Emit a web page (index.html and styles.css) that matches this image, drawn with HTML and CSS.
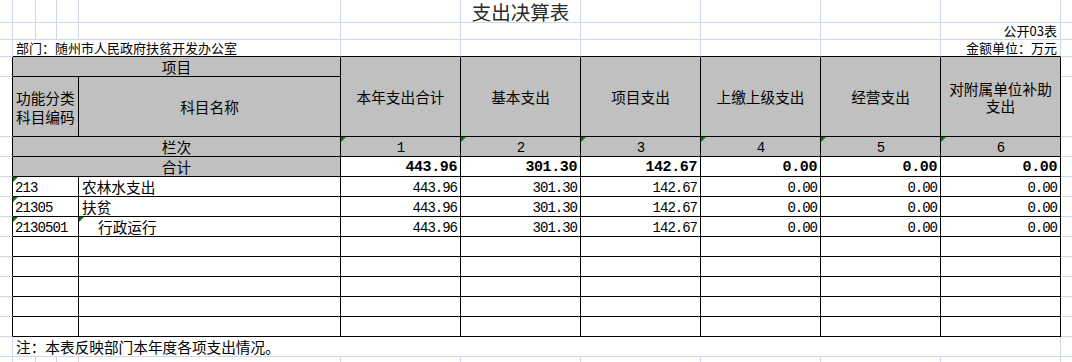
FILE: index.html
```html
<!DOCTYPE html>
<html lang="zh-CN">
<head>
<meta charset="utf-8">
<title>支出决算表</title>
<link rel="stylesheet" href="styles.css">
</head>
<body>
<table class="sheet">
  <colgroup>
    <col class="c0"><col class="c1"><col class="c2"><col class="c3"><col class="c4">
    <col class="cn"><col class="cn"><col class="cn"><col class="cn"><col class="cn"><col class="cn">
    <col class="c11">
  </colgroup>
  <tbody>
    <tr class="r-title">
      <td></td><td></td><td></td><td></td><td></td><td></td>
      <td class="title">支出决算表</td>
      <td></td><td></td><td></td><td></td><td></td>
    </tr>
    <tr class="r-small">
      <td></td><td></td><td></td><td></td><td></td><td></td><td></td><td></td><td></td><td></td>
      <td class="meta right">公开03表</td>
      <td></td>
    </tr>
    <tr class="r-small">
      <td></td>
      <td colspan="4" class="meta tb">部门：随州市人民政府扶贫开发办公室</td>
      <td class="tb"></td><td class="tb"></td><td class="tb"></td><td class="tb"></td><td class="tb"></td>
      <td class="meta right tb">金额单位：万元</td>
      <td></td>
    </tr>
    <tr class="r20">
      <td class="lb"></td>
      <td colspan="4" class="t hd center">项目</td>
      <td rowspan="2" class="t hd center">本年支出合计</td>
      <td rowspan="2" class="t hd center">基本支出</td>
      <td rowspan="2" class="t hd center">项目支出</td>
      <td rowspan="2" class="t hd center">上缴上级支出</td>
      <td rowspan="2" class="t hd center">经营支出</td>
      <td rowspan="2" class="t hd center wrap">对附属单位补助支出</td>
      <td></td>
    </tr>
    <tr class="r60">
      <td class="lb"></td>
      <td colspan="3" class="t hd code-hd">功能分类<br>科目编码</td>
      <td class="t hd center">科目名称</td>
      <td></td>
    </tr>
    <tr class="r20">
      <td class="lb"></td>
      <td colspan="4" class="t hd center">栏次</td>
      <td class="t hd center num-c flag">1</td>
      <td class="t hd center num-c flag">2</td>
      <td class="t hd center num-c flag">3</td>
      <td class="t hd center num-c flag">4</td>
      <td class="t hd center num-c flag">5</td>
      <td class="t hd center num-c flag">6</td>
      <td></td>
    </tr>
    <tr class="r20">
      <td class="lb"></td>
      <td colspan="4" class="t hd center">合计</td>
      <td class="t num bold">443.96</td>
      <td class="t num bold">301.30</td>
      <td class="t num bold">142.67</td>
      <td class="t num bold">0.00</td>
      <td class="t num bold">0.00</td>
      <td class="t num bold">0.00</td>
      <td></td>
    </tr>
    <tr class="r20">
      <td class="lb"></td>
      <td colspan="3" class="t code flag">213</td>
      <td class="t name">农林水支出</td>
      <td class="t num">443.96</td>
      <td class="t num">301.30</td>
      <td class="t num">142.67</td>
      <td class="t num">0.00</td>
      <td class="t num">0.00</td>
      <td class="t num">0.00</td>
      <td></td>
    </tr>
    <tr class="r20">
      <td class="lb"></td>
      <td colspan="3" class="t code flag">21305</td>
      <td class="t name">扶贫</td>
      <td class="t num">443.96</td>
      <td class="t num">301.30</td>
      <td class="t num">142.67</td>
      <td class="t num">0.00</td>
      <td class="t num">0.00</td>
      <td class="t num">0.00</td>
      <td></td>
    </tr>
    <tr class="r20">
      <td class="lb"></td>
      <td colspan="3" class="t code flag">2130501</td>
      <td class="t name indent flag">行政运行</td>
      <td class="t num">443.96</td>
      <td class="t num">301.30</td>
      <td class="t num">142.67</td>
      <td class="t num">0.00</td>
      <td class="t num">0.00</td>
      <td class="t num">0.00</td>
      <td></td>
    </tr>
    <tr class="r20">
      <td class="lb"></td><td colspan="3" class="t"></td><td class="t"></td>
      <td class="t"></td><td class="t"></td><td class="t"></td><td class="t"></td><td class="t"></td><td class="t"></td><td></td>
    </tr>
    <tr class="r20">
      <td class="lb"></td><td colspan="3" class="t"></td><td class="t"></td>
      <td class="t"></td><td class="t"></td><td class="t"></td><td class="t"></td><td class="t"></td><td class="t"></td><td></td>
    </tr>
    <tr class="r20">
      <td class="lb"></td><td colspan="3" class="t"></td><td class="t"></td>
      <td class="t"></td><td class="t"></td><td class="t"></td><td class="t"></td><td class="t"></td><td class="t"></td><td></td>
    </tr>
    <tr class="r20">
      <td class="lb"></td><td colspan="3" class="t"></td><td class="t"></td>
      <td class="t"></td><td class="t"></td><td class="t"></td><td class="t"></td><td class="t"></td><td class="t"></td><td></td>
    </tr>
    <tr class="r20">
      <td class="lb"></td><td colspan="3" class="t"></td><td class="t"></td>
      <td class="t"></td><td class="t"></td><td class="t"></td><td class="t"></td><td class="t"></td><td class="t"></td><td></td>
    </tr>
    <tr class="r20">
      <td></td>
      <td colspan="10" class="note">注：本表反映部门本年度各项支出情况。</td>
      <td></td>
    </tr>
    <tr class="r20">
      <td></td><td></td><td></td><td></td><td></td><td></td><td></td><td></td><td></td><td></td><td></td><td></td>
    </tr>
  </tbody>
</table>
</body>
</html>
```

FILE: styles.css
```css
html, body {
  margin: 0;
  padding: 0;
  background: #ffffff;
  overflow: hidden;
}

.sheet {
  table-layout: fixed;
  border-collapse: separate;
  border-spacing: 0;
  width: 1081px;
  font-family: "Noto Sans CJK SC", "Noto Sans", sans-serif;
  font-size: 14.67px;
  color: #000;
}

.c0 { width: 13px; }
.c1 { width: 23px; }
.c2 { width: 21px; }
.c3 { width: 22px; }
.c4 { width: 262px; }
.cn { width: 120px; }
.c11 { width: 20px; }

.sheet td {
  box-sizing: border-box;
  padding: 0;
  border-right: 1px solid #d0d7e5;
  border-bottom: 1px solid #d0d7e5;
  line-height: 16px;
  white-space: nowrap;
  overflow: visible;
  vertical-align: middle;
  position: relative;
}

.r-title { height: 23px; }
.r-small { height: 17px; }
.r20 { height: 20px; }
.r60 { height: 60px; }

.title {
  text-align: center;
  font-size: 19.5px;
  line-height: 20px;
  padding-top: 2px !important;
  color: #2b2b2b;
}

.meta {
  font-size: 13px;
  line-height: 16px;
  padding: 0 3px !important;
}

.right { text-align: right; }
.center { text-align: center; }

.sheet td.tb { border-bottom-color: #000; }
.sheet td.lb { border-right-color: #000; }
.sheet td.t {
  border-right-color: #000;
  border-bottom-color: #000;
}

.hd { background: #c0c0c0; }

.wrap {
  white-space: normal !important;
  padding: 0 6px !important;
  line-height: 17px !important;
}

.code-hd {
  padding-left: 3px !important;
  line-height: 19px !important;
}

.num-c {
  font-family: "Liberation Mono", monospace;
  font-size: 14px;
  letter-spacing: -1px;
  padding-top: 2px !important;
}

.num {
  text-align: right;
  font-family: "Liberation Mono", monospace;
  font-size: 14px;
  letter-spacing: -1px;
  padding: 2px 3px 0 0 !important;
}

.bold {
  font-weight: bold;
  font-size: 15px;
  letter-spacing: -0.4px;
}

.code {
  font-family: "Liberation Mono", monospace;
  font-size: 14px;
  letter-spacing: -0.9px;
  padding: 2px 0 0 2px !important;
}

.name { padding-left: 3px !important; }
.indent { padding-left: 19px !important; }

.note { padding-left: 3px !important; }

.flag::before {
  content: "";
  position: absolute;
  top: 0;
  left: 0;
  width: 0;
  height: 0;
  border-top: 5px solid #008000;
  border-right: 5px solid transparent;
}
```
